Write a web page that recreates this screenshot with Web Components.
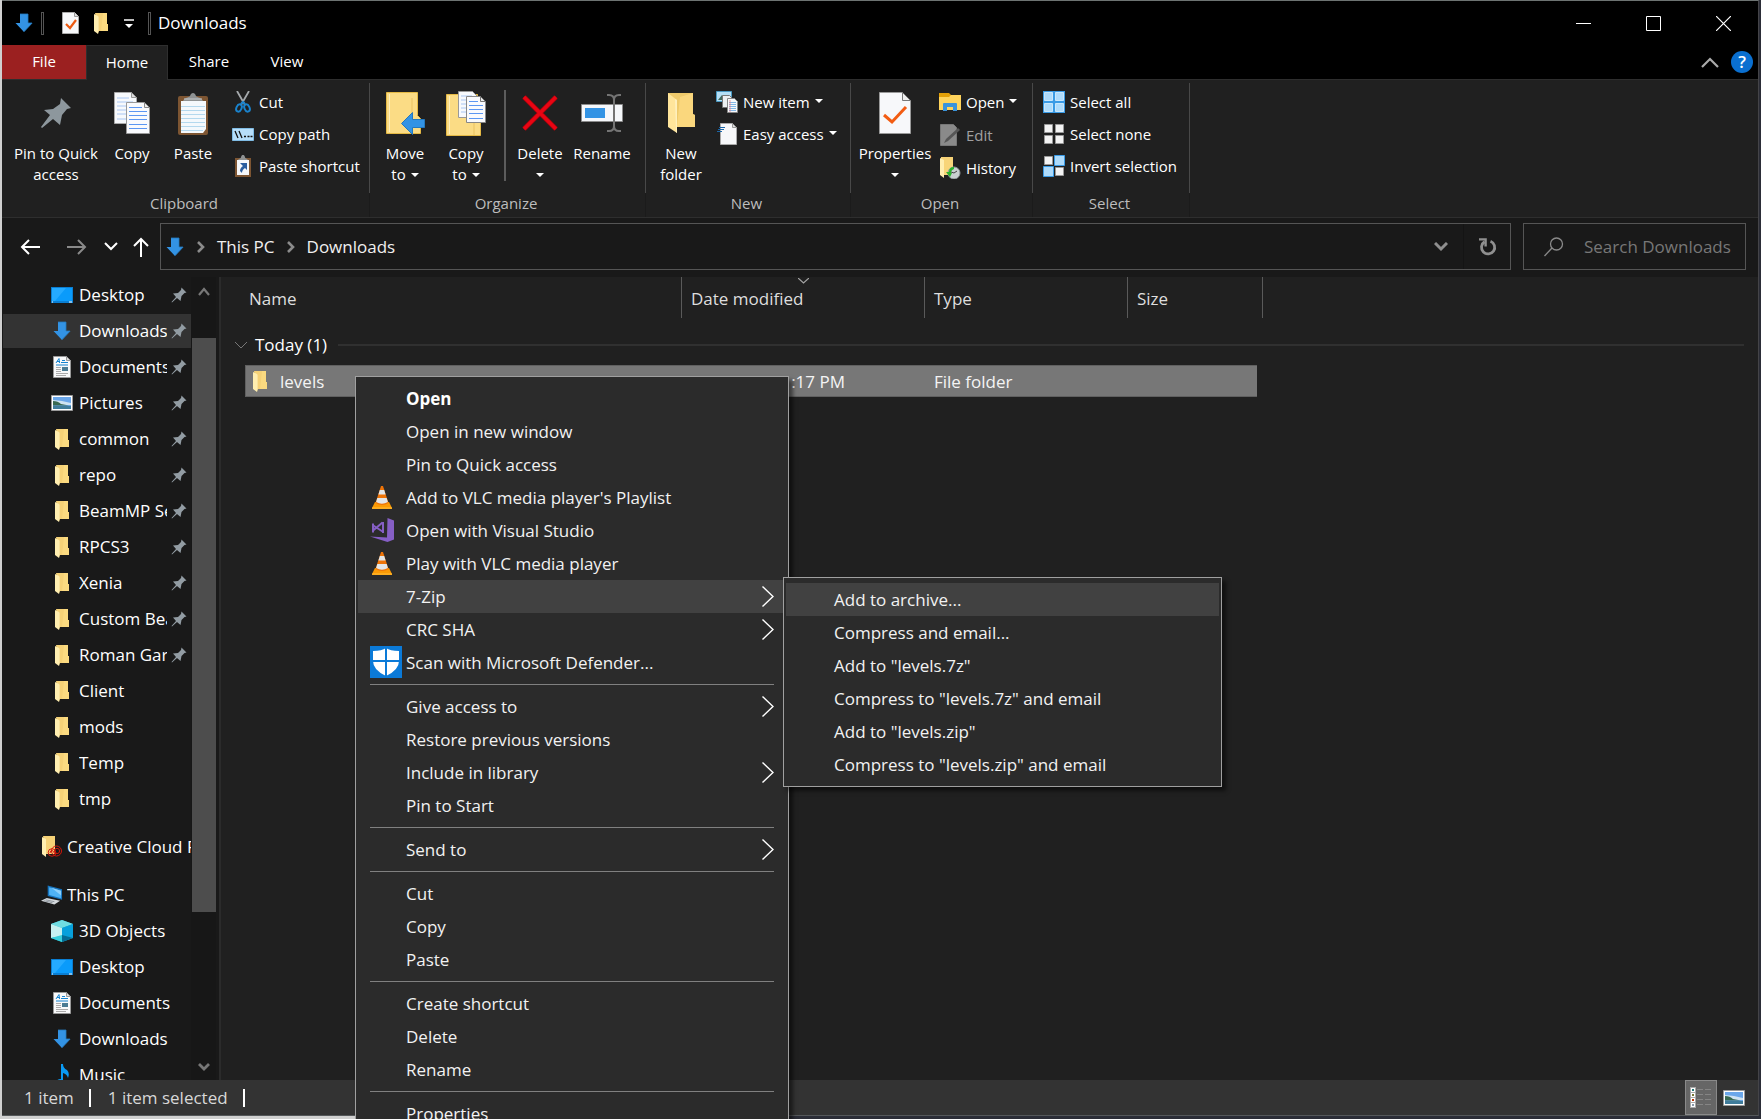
<!DOCTYPE html>
<html lang="en">
<head>
<meta charset="utf-8">
<title>Downloads</title>
<style>
html,body{height:100%}
body{margin:0;overflow:hidden;background:linear-gradient(90deg,#d0d0d0 355px,#2b2d37 355px);font-family:"Open Sans","Noto Sans",sans-serif;font-size:17px;line-height:24px;color:#fff}
</style>
</head>
<body>
<explorer-window></explorer-window>
<script>
const ICONS={
arrow:[18,20,'<path d="M5 1h8v9h4.500L9 19 .5 10H5z" fill="#3393e4"/><path d="M5 1h8v9h4L9 18.500" fill="none" stroke="#2478bd" stroke-width=".8"/>'],
doccheck:[17,22,'<path d="M.5.5h12l4 4v17H.5z" fill="#f7f8fa" stroke="#aaa"/><path d="M12.500.5v4h4" fill="#ddd" stroke="#999"/><path d="M4 12l4 4 6-8" fill="none" stroke="#ec5a12" stroke-width="2.200"/>'],
folder:[15,21,'<path d="M1 0h12v11h1v7H4z" fill="#f6d277"/><path d="M9 0h4v11h1v7H7z" fill="#ffdf87" opacity=".6"/><path d="M0 1l4 2v18l-4-3z" fill="#ffeeb0"/><path d="M4 3l1 1v14l-1 3z" fill="#fbe29a"/>'],
more:[10,9,'<path d="M0 1h10" stroke="#fff" stroke-width="1.500"/><path d="M1 5h8L5 9z" fill="#fff"/>'],
min:[15,15,'<path d="M0 7.500h15" stroke="#fff"/>'],
max:[15,15,'<path d="M.5.5h14v14H.5z" fill="none" stroke="#fff"/>'],
close:[15,15,'<path d="M0 0l15 15M15 0L0 15" stroke="#fff" stroke-width="1.200"/>'],
collapse:[18,11,'<path d="M1 10l8-8 8 8" fill="none" stroke="#aaa" stroke-width="2.200"/>'],
tri:[8,4,'<path d="M0 0h8L4 4z" fill="#fff"/>'],
pinbig:[30,30,'<path d="M20 0l10 10-4 1-5 6-2 10-7-6L1 30l-1-1 9-12-6-5 9-1 7-5z" fill="#8d979d"/>'],
pin:[16,16,'<path d="M10.500.5l5 5-2 .5-3 3-1 5-3.500-3L1 15.500l-.5-.5L5 10 2 6.500l5-.5 3-3z" fill="#929ca3"/>'],
copy:[36,42,'<path d="M.5.500h17l5 5v26H.5z" fill="#f7f9fc" stroke="#aaa"/><path d="M17.500.5v5h5z" fill="#ddd" stroke="#999"/><path d="M3 6h12M3 10h16M3 14h9M3 18h9M3 22h9M3 27h9" stroke="#a9c6f2"/><path d="M12.500 10.500h18l5 5v26h-23z" fill="#f9fafd" stroke="#999"/><path d="M30.500 10.500v5h5z" fill="#eee" stroke="#888"/><path d="M15 15.500h13M15 19.500h18M15 23.500h18M15 27.500h18M15 32.500h18M15 36.500h18" stroke="#5b96f2" stroke-width="1.200"/>'],
paste:[30,43,'<rect y="4" width="30" height="39" rx="2" fill="#7d5532"/><path d="M3 9h25v28l-3 4H3z" fill="#f4f8fc"/><path d="M3 14.500h24M3 18.500h24M3 22.500h24M3 26.500h24M3 30.500h24M3 34.500h24M3 38.500h22" stroke="#b4d8ee"/><path d="M5 9c2-4 5-3 7-5 1-4 5-4 6 0 2 2 5 1 7 5z" fill="#8f9293"/><path d="M6 7h18" stroke="#c7c9ca"/>'],
cut:[16,22,'<path d="M2 0l8 14M14 0L6 14" stroke="#a5a9ac" stroke-width="1.800"/><ellipse cx="4" cy="17" rx="2.500" ry="3.800" transform="rotate(25 4 17)" fill="none" stroke="#1a83cd" stroke-width="2"/><ellipse cx="12" cy="17" rx="2.500" ry="3.800" transform="rotate(-25 12 17)" fill="none" stroke="#1a83cd" stroke-width="2"/><path d="M6 13l2-2 2 2" stroke="#1a83cd" stroke-width="2" fill="none"/>'],
copypath:[22,13,'<path d="M.5.5h21v12H.5z" fill="#b6defa" stroke="#80bce4"/><path d="M3 3l3 7M7 3l3 7" stroke="#111" stroke-width="1.300"/><path d="M12 8.500h2M15.500 8.500h2M18.500 8.500h2" stroke="#111" stroke-width="1.600"/>'],
pasteshort:[16,22,'<path d="M0 3h16v19H0z" fill="#7d5532"/><path d="M2 5h12v15H2z" fill="#f5f7fa"/><path d="M3 5c1-2 3-1 3-3 1-3 3-3 4 0 0 2 2 1 3 3z" fill="#8f9293"/><path d="M5 8h7v7l-2-2c-2 1-3 3-3 5l-2-2c0-2 1-4 3-5z" fill="#2a5d9f"/>'],
moveto:[39,43,'<path d="M.5.500h31v23l3 3v15H.5z" fill="#fbdc85" stroke="#e5b944"/><path d="M3.500 2v38" stroke="#fff0bc"/><path d="M26 6v34" stroke="#e9c263"/><path d="M15.500 31.500l11-11v7h12v8h-12v7z" fill="#3393e4" stroke="#2478bd"/>'],
copyto:[40,45,'<path d="M.5 3.500h31v23l3 3v15H.5z" fill="#fbdc85" stroke="#e5b944"/><path d="M3.500 5v38" stroke="#fff0bc"/><path d="M28 32v12" stroke="#e9c263"/><path d="M12.500.5h14l5 5v21h-19z" fill="#f7f9fc" stroke="#999"/><path d="M15 5h11M15 9h5M15 13h5M15 17h5M15 21h5" stroke="#a9c6f2"/><path d="M20.500 5.500h14l5 5v21h-19z" fill="#f9fafd" stroke="#888"/><path d="M34.500 5.500v5h5z" fill="#eee" stroke="#777"/><path d="M23 10.500h9M23 14.500h14M23 18.500h14M23 22.500h14M23 27.500h14" stroke="#5b96f2" stroke-width="1.200"/>'],
delete:[36,36,'<path d="M2 2l32 32M34 2L2 34" stroke="#a3040c" stroke-width="5"/><path d="M2 2l32 32M34 2L2 34" stroke="#e90513" stroke-width="3.400"/>'],
rename:[42,38,'<path d="M.5 10.500h41v17H.5z" fill="#f5f7fa" stroke="#8b8b8b"/><path d="M4 14h20v10H4z" fill="#3393e4"/><path d="M33 5v28M26 1h2q5 0 5 5 0-5 5-5h2M26 37h2q5 0 5-5 0 5 5 5h2" fill="none" stroke="#747474" stroke-width="2"/>'],
newfolder:[27,40,'<path d="M0 0h25v21l2 1v12H8L0 30z" fill="#efca6b"/><path d="M12 4L25 0v21l2 1v12H9z" fill="#ffdd84" opacity=".7"/><path d="M0 0l9 7v33l-9-6z" fill="#ffe59b"/><path d="M7 6l2 1v33l-1-1z" fill="#fff0bd"/>'],
newitem:[22,22,'<path d="M.5.5h15v10H.5z" fill="#b5dff5" stroke="#4a9ac4"/><path d="M2 9l4-5 3 3 2-2v4z" fill="#41695c"/><path d="M6.500 4.500h7l3 3v9h-10z" fill="#eceff1" stroke="#777"/><path d="M11.500 7.500h7l3 3v11h-10z" fill="#f8f9fb" stroke="#888"/><path d="M13 11.500h7M13 13.500h7M13 15.500h7M13 17.500h7M13 19.500h7" stroke="#85b8e6"/><path d="M14 9v12" stroke="#e5737c" stroke-width=".7"/>'],
easy:[20,22,'<path d="M3.500.5h12l4 4v17h-16z" fill="#f7f8fa" stroke="#aaa"/><path d="M15.500.5v4h4z" fill="#ddd" stroke="#999"/><path d="M2 4.500h6M1 6.500h6M0 8.500h5" stroke="#1b66a8" stroke-width="1.200"/>'],
props:[32,42,'<path d="M.5.500h23l8 8v33H.5z" fill="#f7f8fa" stroke="#999"/><path d="M23.500.5v8h8z" fill="#eee" stroke="#777"/><path d="M5 23l8 7 14-15" fill="none" stroke="#f25c12" stroke-width="3"/>'],
open:[22,20,'<path d="M0 1h10l2 2v4H0z" fill="#e3a008"/><path d="M0 5h10l2-2h10v15H0z" fill="#ffd45c"/><path d="M4 12q0-1 1-1h12q1 0 1 1v7h-4v-4H8v4H4z" fill="#3a93da"/>'],
edit:[20,22,'<path d="M.5.5h13l3 3v18H.5z" fill="#8a8a8a" stroke="#777"/><path d="M4 19l2-4L18 4l2 2L8 17z" fill="#565656"/>'],
history:[21,22,'<path d="M1 0h12v11H4L1 18z" fill="#f6d277"/><path d="M0 1l4 2v18l-4-3z" fill="#ffeeb0"/><path d="M4 3h9v15H4z" fill="#f8d579"/><circle cx="14" cy="16" r="6" fill="#c9cfd0" stroke="#8f9798"/><path d="M14 16l3-2M14 16l-3-1" stroke="#444"/><path d="M14 10q-5 0-5 5H6l4 5 2-4h-1q0-3 3-4z" fill="#29b32c"/>'],
selall:[22,22,'<path d="M0 0h22v22H0z" fill="#3a9be6"/><path d="M1.500 1.500h8v8h-8zM12.500 1.500h8v8h-8zM1.500 12.500h8v8h-8zM12.500 12.500h8v8h-8z" fill="#aedbfb" stroke="#c8e7fc"/>'],
selnone:[22,22,'<path d="M1.500 1.500h8v8h-8zM12.500 1.500h8v8h-8zM1.500 12.500h8v8h-8zM12.500 12.500h8v8h-8z" fill="#f4f4f4" stroke="#999"/>'],
selinv:[22,22,'<path d="M1.500 1.500h8v8h-8zM12.500 12.500h8v8h-8z" fill="#f4f4f4" stroke="#999"/><path d="M11.500.5h10v10h-10zM.5 11.500h10v10H.5z" fill="#aedbfb" stroke="#3a9be6"/>'],
back:[20,16,'<path d="M9 1L2 8l7 7M2 8h18" fill="none" stroke="#fff" stroke-width="2"/>'],
fwd:[20,16,'<path d="M11 1l7 7-7 7M0 8h18" fill="none" stroke="#8a8a8a" stroke-width="2"/>'],
down:[14,9,'<path d="M1 1l6 6 6-6" fill="none" stroke="#fff" stroke-width="2"/>'],
up:[16,20,'<path d="M1 9l7-7 7 7M8 2v18" fill="none" stroke="#fff" stroke-width="2"/>'],
crumb:[8,12,'<path d="M1 1l5 5-5 5" fill="none" stroke="#8b8b8b" stroke-width="2.600"/>'],
drop:[14,10,'<path d="M1 1l6 6 6-6" fill="none" stroke="#8f8f8f" stroke-width="3"/>'],
refresh:[18,18,'<path d="M11.500 3.200a6.600 6.600 0 1 1-6 .6" fill="none" stroke="#909090" stroke-width="2.800"/><path d="M0 1.400h6.600v7" fill="none" stroke="#909090" stroke-width="2.400"/>'],
search:[20,20,'<circle cx="12.500" cy="7" r="6" fill="none" stroke="#8a8a8a" stroke-width="1.300"/><path d="M8 11l-7.500 8" stroke="#8a8a8a" stroke-width="1.300"/>'],
desktop:[22,16,'<path d="M0 0h22v16H0z" fill="#0a7ed2"/><path d="M1 1h20v13H1z" fill="#0a9bfb"/><path d="M1 1h14L4 14H1z" fill="#25aaff"/><path d="M1 15h1M18 15h3" stroke="#fff"/>'],
docs:[18,22,'<path d="M.5.5h13l4 4v17H.5z" fill="#f8f9fa" stroke="#999"/><path d="M13.500.5v4h4z" fill="#ddd" stroke="#999"/><path d="M3 7l3-4.500L6.500 7M4 5.500h3M9 4.500h3M8 6.500h7M3 9h12" stroke="#1583cf" fill="none"/><path d="M3 11.500h5M3 13.500h5M3 15.500h5M3 17.500h12M3 19.500h10" stroke="#aaa"/><path d="M9 11h6v4H9z" fill="#4a7b93"/>'],
pics:[22,16,'<path d="M.5.5h21v15H.5z" fill="#fff" stroke="#9a9a9a"/><path d="M2 2h18v12H2z" fill="#6ba7ea"/><path d="M2 5l9 1 9 2v2H2z" fill="#cfe3f3"/><path d="M2 6q5 0 8 3l8 1.500H2z" fill="#386951"/><path d="M2 11h18v3H2z" fill="#3f7c9b"/>'],
cloud:[20,22,'<path d="M1 0h12v18H4z" fill="#f6d277"/><path d="M0 1l4 2v18l-4-3z" fill="#ffeeb0"/><g fill="none" stroke="#d3160b" stroke-width="1"><circle cx="14.500" cy="15" r="5"/><circle cx="10" cy="16.500" r="3.800"/><circle cx="15" cy="15" r="2.600"/><path d="M8 17q0-2.500 2.500-2.500l3 4"/></g>'],
pc:[23,21,'<path d="M7 0l15 4v11L7 11z" fill="#1673bd"/><path d="M8.500 2l12.500 3.500v8L8.500 10z" fill="#4fb2f5"/><path d="M11 2.500L21 5.500v5z" fill="#8dd0fb"/><path d="M6 13l14 3-6 4L0 16z" fill="#d5d9dd"/><path d="M5 15l9 2M3 16l9 2" stroke="#8e959c"/>'],
cube:[22,22,'<path d="M11 0l11 4v14l-11 4L0 18V4z" fill="#16aec9"/><path d="M11 0l11 4-11 4L0 4z" fill="#6fdde2"/><path d="M0 4l11 4v8L0 18z" fill="#c7f1f1"/><path d="M11 8l11-4v14l-11-3z" fill="#07a0dc"/><path d="M0 18l11-3v7z" fill="#39cfdc"/><path d="M11 15l11 3-11 4z" fill="#046d97"/>'],
music:[13,22,'<path d="M5 0h2q0 4 4 6 3 3 1 8-1-4-5-5v8q-1 4-4 4-3-1-3-3 1-3 5-3z" fill="#0a9bf5"/>'],
su:[12,9,'<path d="M1 8l5-6 5 6" fill="none" stroke="#777" stroke-width="2.200"/>'],
sd:[12,9,'<path d="M1 1l5 5 5-5" fill="none" stroke="#777" stroke-width="2.800"/>'],
thin:[14,8,'<path d="M1 1l6 6 6-6" fill="none" stroke="#777"/>'],
sort:[11,6,'<path d="M0 0l5.500 5L11 0" fill="none" stroke="#a5a5a5" stroke-width="1.200"/>'],
sub:[12,21,'<path d="M.5.5l10.500 10L.5 20.500" fill="none" stroke="#fff" stroke-width="1.400"/>'],
vlc:[20,23,'<path d="M3 16h14l3 6v1H0v-1z" fill="#fb9a05"/><path d="M0 22h20" stroke="#ffc03a"/><path d="M9 0h2l5.500 17q-6.500 4-13 0z" fill="#ee7408"/><path d="M7.800 4h4.400l1.400 4.500H6.400zM5.300 12h9.400l1.200 4q-6 3.500-11.800 0z" fill="#e3e6e8"/>'],
vs:[24,24,'<path d="M17.500 0L24 2.500v19L17.500 24 0 18.500l17 1z" fill="#865fc5"/><path d="M3 5.500v9M2.500 7l10 6.500M2.500 13l10-8.500M13 4v11" fill="none" stroke="#865fc5" stroke-width="2"/>'],
shield:[32,32,'<path d="M0 0h32v32H0z" fill="#0b7ad8"/><path d="M16 2q4 3 13 3v10q0 9-13 15Q3 24 3 15V5q9 0 13-3z" fill="#fff"/><path d="M16 1v30M2 15h28" stroke="#0b7ad8" stroke-width="2"/>'],
details:[22,22,'<path d="M0 0h6v21H0z" fill="#aaa"/><path d="M1 1h4v4H1zM1 6h4v4H1zM1 11h4v4H1zM1 16h4v4H1z" fill="#fff"/><path d="M2 3h2" stroke="#277" stroke-width="2"/><path d="M2 8h2" stroke="#773" stroke-width="2"/><path d="M2 13h2" stroke="#b30" stroke-width="2"/><path d="M2 18h2" stroke="#89a" stroke-width="2"/><path d="M7 2.500h6M15 2.500h6M7 7.500h6M15 7.500h6M7 12.500h6M15 12.500h6M7 17.500h6M15 17.500h6" stroke="#858585"/>']
};
const RESET=`*{box-sizing:border-box}button,a,input{font:inherit;color:inherit;background:none;border:0;margin:0;padding:0;text-decoration:none;text-align:inherit;outline:none}`;
function define(name,css,html){
  customElements.define(name,class extends HTMLElement{
    constructor(){super();this.attachShadow({mode:'open'});}
    connectedCallback(){
      const a=n=>this.getAttribute(n);
      this.shadowRoot.innerHTML='<style>'+RESET+css+'</style>'+(typeof html==='function'?html(a):html);
    }
  });
}
define('ui-icon',':host{display:inline-flex;flex:none;align-items:center;justify-content:center}svg{display:block}',a=>{
  const [w,h,b]=ICONS[a('name')];return `<svg width="${w}" height="${h}" viewBox="0 0 ${w} ${h}" aria-hidden="true">${b}</svg>`;});

define('title-bar',`:host{display:flex;align-items:center;height:44px;background:#000;padding-left:13px}
.sep{width:3px;height:23px;border:1px solid #555;flex:none}
.q{display:flex;align-items:center;gap:15px;padding:0 14px 0 18px}
.q button{display:flex}h1{font:inherit;margin:0 0 0 7px;flex:1}
.w{display:flex}.w button{width:70px;height:44px;display:flex;align-items:center;justify-content:center}`,
`<ui-icon name="arrow"></ui-icon><span style="width:8px"></span><span class="sep"></span>
<div class="q"><button aria-label="Properties"><ui-icon name="doccheck"></ui-icon></button><button aria-label="New folder"><ui-icon name="folder"></ui-icon></button><button aria-label="Customize"><ui-icon name="more"></ui-icon></button></div>
<span class="sep"></span><h1>Downloads</h1>
<div class="w"><button aria-label="Minimize"><ui-icon name="min"></ui-icon></button><button aria-label="Maximize"><ui-icon name="max"></ui-icon></button><button aria-label="Close"><ui-icon name="close"></ui-icon></button></div>`);

define('ribbon-tabs',`:host{display:flex;height:35px;background:#000;border-bottom:1px solid #2e2e2e;font-size:15px}
button{height:34px;padding:0 0 2px;width:82px;text-align:center}
.file{background:#9b2020;width:84px}.home{background:#202020;border:1px solid #2e2e2e;border-bottom:0;height:35px}.view{width:74px}
.r{margin-left:auto;display:flex;align-items:center;gap:12px;padding-right:5px}.r button{width:auto;padding:0;display:flex;align-items:center}
.help{width:22px;height:22px;border-radius:11px;background:#0a6fd0;display:block;text-align:center;line-height:22px;font-weight:600;font-size:17px}`,
`<button class="file">File</button><button class="home">Home</button><button>Share</button><button class="view">View</button>
<div class="r"><button aria-label="Collapse ribbon"><ui-icon name="collapse"></ui-icon></button><button><span class="help">?</span></button></div>`);

define('ribbon-group',`:host{display:flex;flex-direction:column;border-right:1px solid #2a2a2a;border-image:linear-gradient(#202020 4px,#484848 4px,#484848 112px,#1b1b1b 112px) 1;flex:none;padding-left:5px}
.b{display:flex;height:112px}.l{line-height:22px;text-align:center;color:#bdbdbd;padding-right:8px}`,
a=>`<div class="b"><slot></slot></div><div class="l">${a('label')}</div>`);
define('ribbon-big',`:host{display:block;flex:none}
button{width:100%;display:flex;flex-direction:column;align-items:center;padding-top:11px;line-height:21px;text-align:center;white-space:nowrap}
.i{height:44px;margin-bottom:8px;display:flex;align-items:center}.t{display:flex;align-items:center;gap:5px;min-height:21px}`,
a=>`<button><span class="i"><ui-icon name="${a('icon')}"></ui-icon></span><span>${a('a')}</span>${a('b')||a('menu')!==null?`<span class="t">${a('b')||''}${a('menu')!==null?'<ui-icon name="tri"></ui-icon>':''}</span>`:''}</button>`);
define('ribbon-column',`:host{display:flex;flex-direction:column;padding:6px 0 0 5px}:host([loose]){gap:1px}`,`<slot></slot>`);
define('ribbon-small',`:host{display:block}button{display:flex;align-items:center;height:32px;gap:5px;white-space:nowrap}
ui-icon.i{width:22px}:host([off]){color:#a0a0a0}.m{margin-bottom:2px}`,
a=>`<button><ui-icon class="i" name="${a('icon')}"></ui-icon><span>${a('a')}</span>${a('menu')!==null?'<ui-icon class="m" name="tri"></ui-icon>':''}</button>`);
define('ribbon-bar',`:host{display:flex;height:138px;background:#202020;border-bottom:1px solid #2e2e2e;font-size:15px}
.g1{width:368px}.g2{width:276px}.g3{width:205px}.g4{width:182px}.g5{width:157px}
.w54{width:54px}.w60{width:60px}.w62{width:62px}.w68{width:68px}.w78{width:78px}.w98{width:98px}
.d{width:2px;height:91px;background:#5c5c5c;margin:10px 3px 0 7px;flex:none}`,
`<ribbon-group class="g1" label="Clipboard"><ribbon-big class="w98" icon="pinbig" a="Pin to Quick" b="access"></ribbon-big><ribbon-big class="w54" icon="copy" a="Copy"></ribbon-big><ribbon-big class="w68" icon="paste" a="Paste"></ribbon-big>
<ribbon-column><ribbon-small icon="cut" a="Cut"></ribbon-small><ribbon-small icon="copypath" a="Copy path"></ribbon-small><ribbon-small icon="pasteshort" a="Paste shortcut"></ribbon-small></ribbon-column></ribbon-group>
<ribbon-group class="g2" label="Organize"><ribbon-big class="w60" icon="moveto" a="Move" b="to" menu></ribbon-big><ribbon-big class="w62" icon="copyto" a="Copy" b="to" menu></ribbon-big><span class="d"></span><ribbon-big class="w62" icon="delete" a="Delete" menu></ribbon-big><ribbon-big class="w62" icon="rename" a="Rename"></ribbon-big></ribbon-group>
<ribbon-group class="g3" label="New"><ribbon-big class="w60" icon="newfolder" a="New" b="folder"></ribbon-big><ribbon-column><ribbon-small icon="newitem" a="New item" menu></ribbon-small><ribbon-small icon="easy" a="Easy access" menu></ribbon-small></ribbon-column></ribbon-group>
<ribbon-group class="g4" label="Open"><ribbon-big class="w78" icon="props" a="Properties" menu></ribbon-big><ribbon-column loose><ribbon-small icon="open" a="Open" menu></ribbon-small><ribbon-small icon="edit" a="Edit" off></ribbon-small><ribbon-small icon="history" a="History"></ribbon-small></ribbon-column></ribbon-group>
<ribbon-group class="g5" label="Select"><ribbon-column><ribbon-small icon="selall" a="Select all"></ribbon-small><ribbon-small icon="selnone" a="Select none"></ribbon-small><ribbon-small icon="selinv" a="Invert selection"></ribbon-small></ribbon-column></ribbon-group>`);

define('address-bar',`:host{display:flex;height:59px;background:#191919;padding:5px 12px 7px 0;align-items:stretch}
button{display:flex;align-items:center}.n{display:flex;align-items:center;width:158px;padding-left:18px}
.n button{margin-right:27px}.n button:nth-child(2){margin-right:17px}.n button:nth-child(3){margin-right:15px}.n button:nth-child(4){margin:0}
.p{flex:1;display:flex;align-items:center;border:1px solid #555;padding-left:5px;color:#f0f0f0}
.p ui-icon[name=arrow]{margin-right:13px}.gap{margin-right:12px}
.x{margin-left:auto;width:44px;justify-content:center}.r{width:47px;align-self:stretch;justify-content:center;border-left:1px solid #141414;padding-left:2px}
.s{display:flex;align-items:center;width:223px;border:1px solid #555;margin-left:12px;padding-left:20px;gap:20px}
input{flex:1;min-width:0;color:#fff}input::placeholder{color:#777;opacity:1}`,
`<nav class="n"><button aria-label="Back"><ui-icon name="back"></ui-icon></button><button aria-label="Forward"><ui-icon name="fwd"></ui-icon></button><button aria-label="Recent"><ui-icon name="down"></ui-icon></button><button aria-label="Up"><ui-icon name="up"></ui-icon></button></nav>
<div class="p"><ui-icon name="arrow"></ui-icon><ui-icon name="crumb" class="gap"></ui-icon><a href="#pc" class="gap">This PC</a><ui-icon name="crumb" class="gap"></ui-icon><a href="#dl">Downloads</a><button class="x" aria-label="History"><ui-icon name="drop"></ui-icon></button><button class="r" aria-label="Refresh"><ui-icon name="refresh"></ui-icon></button></div>
<label class="s"><ui-icon name="search"></ui-icon><input aria-label="Search" placeholder="Search Downloads"></label>`);

define('tree-item',`:host{display:block;flex:none}:host([root]){padding-top:12px}
a{display:flex;align-items:center;height:34px;margin:1px 0 1px 1px;padding-left:48px;padding-right:4px;white-space:nowrap}
:host([on]) a{background:#333}:host([root]) a{padding-left:38px;padding-right:0}
.i{width:22px;margin-right:6px}:host([root]) .i{margin-right:4px}.t{flex:1;overflow:hidden;min-width:0}.p{margin-left:3px;width:17px}`,
a=>`<a href="#item"><ui-icon class="i" name="${a('icon')}"></ui-icon><span class="t">${a('label')}</span>${a('pin')!==null?'<ui-icon class="p" name="pin"></ui-icon>':''}</a>`);
const T=(i,l,x='')=>`<tree-item icon="${i}" label="${l}" ${x}></tree-item>`;
define('nav-tree',`:host{display:flex;width:219px;flex:none;background:#191919;border-right:2px solid #2b2b2b;overflow:hidden}
.l{width:189px;overflow:hidden;display:flex;flex-direction:column}
.s{width:25px;background:#171717;display:flex;flex-direction:column;align-items:center;padding:10px 0 8px}
.th{background:#4d4d4d;width:24px;height:574px;margin-top:42px}.s ui-icon:last-child{margin-top:auto}`,
'<div class="l">'+T('desktop','Desktop','pin')+T('arrow','Downloads','pin on')+T('docs','Documents','pin')+T('pics','Pictures','pin')+['common','repo','BeamMP Server','RPCS3','Xenia','Custom BeamNG','Roman Garden'].map(n=>T('folder',n,'pin')).join('')+['Client','mods','Temp','tmp'].map(n=>T('folder',n)).join('')+T('cloud','Creative Cloud Files','root')+T('pc','This PC','root')+T('cube','3D Objects')+T('desktop','Desktop')+T('docs','Documents')+T('arrow','Downloads')+T('music','Music')+'</div><div class="s"><ui-icon name="su"></ui-icon><span class="th"></span><ui-icon name="sd"></ui-icon></div>');

define('file-list',`:host{display:block;flex:1;min-width:0;background:#202020}
table{border-collapse:separate;border-spacing:0;table-layout:fixed;width:100%}
th,td{padding:0;font-weight:400;text-align:left}
thead th{height:41px;padding:2px 0 0 9px;color:#dedede;position:relative}thead th:nth-child(2){padding-left:4px}
thead th:nth-child(n+2):nth-child(-n+5){border-right:1px solid #5a5a5a}
.so{position:absolute;top:1px;left:0;right:0}
.g{display:flex;align-items:center;height:47px;padding:6px 14px 0 13px}.g ui-icon{margin-right:7px}.g i{flex:1;height:2px;background:#303030;margin-left:11px}
.f td{height:32px;background:#777;border:solid #606060;border-width:1px 0;padding:2px 0 0 9px;color:#f4f4f4}
.f td:first-child,.f td:last-child{background:none;border:0;padding:0}
.f td:nth-child(2){border-left-width:1px;padding-left:7px}.f div{display:flex;align-items:center;gap:12px}.f ui-icon{margin-bottom:2px}
.f td:nth-child(3){text-align:right;padding:2px 80px 0 0}
.f td:nth-child(5){padding:0;border-color:transparent;background:linear-gradient(90deg,#777 129px,transparent 129px) padding-box,linear-gradient(90deg,#606060 129px,transparent 129px) border-box}`,
`<table><colgroup><col style="width:24px"><col style="width:437px"><col style="width:243px"><col style="width:203px"><col style="width:135px"><col></colgroup>
<thead><tr><th></th><th>Name</th><th><ui-icon class="so" name="sort"></ui-icon>Date modified</th><th>Type</th><th>Size</th><th></th></tr></thead>
<tbody><tr><td colspan="6"><div class="g"><ui-icon name="thin"></ui-icon>Today (1)<i></i></div></td></tr>
<tr class="f"><td></td><td><div><ui-icon name="folder"></ui-icon>levels</div></td><td>:17 PM</td><td>File folder</td><td></td><td></td></tr></tbody></table>`);

define('status-bar',`:host{display:flex;align-items:center;height:35px;background:#333;padding-left:22px;color:#d8d8d8}
i{width:2px;height:18px;background:#fff;margin:0 17px 0 15px}span{white-space:nowrap}
.v{margin-left:auto;display:flex;height:35px}button{display:flex;align-items:center;justify-content:center;width:32px}.on{background:#666;border:1px solid #8a8a8a}.v button:last-child{width:34px;margin-right:7px}`,
`<span>1 item</span><i></i><span>1 item selected</span><i></i><div class="v"><button class="on" aria-label="Details"><ui-icon name="details"></ui-icon></button><button aria-label="Large icons"><ui-icon name="pics"></ui-icon></button></div>`);

define('menu-item',`:host{display:block}button{display:flex;align-items:center;width:100%;height:33px;padding:1px 12px 0 12px;white-space:nowrap}
:host([on]) button{background:#414141}:host([bold]) button{font-weight:700;color:#fff}
.i{width:36px;flex:none;display:flex}.t{flex:1}.i ui-icon,ui-icon[name=sub]{margin-bottom:2px}.i.s ui-icon{margin-left:2px}`,
a=>`<button role="menuitem"><span class="i ${a('icon')==='vlc'?'s':''}">${a('icon')?`<ui-icon name="${a('icon')}"></ui-icon>`:''}</span><span class="t">${a('label').replace(/"/g,'&quot;')}</span>${a('sub')!==null?'<ui-icon name="sub"></ui-icon>':''}</button>`);
define('menu-line',':host{display:block;height:11px;padding:5px 12px 0 12px}hr{margin:0;border:0;height:1px;background:#808080}','<hr>');
define('context-menu',':host{display:block;background:#2b2b2b;border:1px solid #a0a0a0;padding:5px 2px;color:#f2f2f2;box-shadow:4px 4px 4px rgba(0,0,0,.5)}','<slot></slot>');
const M=(l,x='')=>l==='-'?'<menu-line></menu-line>':`<menu-item label='${l.replace(/'/g,'&#39;')}' ${x}></menu-item>`;
define('explorer-window',`:host{box-sizing:border-box;display:flex;flex-direction:column;height:calc(100vh - 3px);margin:0 2px;border-top:1px solid #6d7372;border-right:1px solid #444448;border-bottom:1px solid #55585a;position:relative;background:#202020}
main{display:flex;flex:1;min-height:0}
.m1{position:absolute;left:353px;top:375px;width:434px}.m2{position:absolute;left:781px;top:576px;width:439px}`,
'<title-bar></title-bar><ribbon-tabs></ribbon-tabs><ribbon-bar></ribbon-bar><address-bar></address-bar><main><nav-tree></nav-tree><file-list></file-list></main><status-bar></status-bar><context-menu class="m1">'+
M('Open','bold')+M('Open in new window')+M('Pin to Quick access')+M("Add to VLC media player's Playlist",'icon="vlc"')+M('Open with Visual Studio','icon="vs"')+M('Play with VLC media player','icon="vlc"')+M('7-Zip','sub on')+M('CRC SHA','sub')+M('Scan with Microsoft Defender...','icon="shield"')+M('-')+M('Give access to','sub')+M('Restore previous versions')+M('Include in library','sub')+M('Pin to Start')+M('-')+M('Send to','sub')+M('-')+M('Cut')+M('Copy')+M('Paste')+M('-')+M('Create shortcut')+M('Delete')+M('Rename')+M('-')+M('Properties')+
'</context-menu><context-menu class="m2">'+M('Add to archive...','on')+M('Compress and email...')+M('Add to "levels.7z"')+M('Compress to "levels.7z" and email')+M('Add to "levels.zip"')+M('Compress to "levels.zip" and email')+'</context-menu>');
</script>
</body>
</html>
